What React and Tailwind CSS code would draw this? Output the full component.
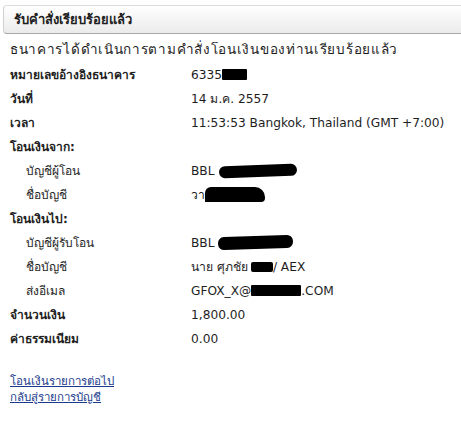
import React from "react";

const Blob = ({ w, h = 12, className = "" }) => (
  <span
    className={`inline-block bg-black align-middle ${className}`}
    style={{ width: w, height: h }}
  />
);

const Row = ({ label, children, indent, bold = true }) => (
  <div className="flex h-[24px] items-center">
    <div className={`w-[181px] shrink-0 ${indent ? "pl-[16px]" : ""} ${bold ? "font-bold" : ""}`}>{label}</div>
    <div className="flex items-center whitespace-nowrap text-[12.2px]">{children}</div>
  </div>
);

export default function App() {
  return (
    <div
      className="w-[461px] h-[429px] bg-white text-[#1e1e1e] text-[12px] overflow-hidden"
      style={{ fontFamily: "Tahoma, 'DejaVu Sans', 'Noto Sans', sans-serif" }}
    >
      <div className="pt-[5px] pl-[3px]">
        <div className="h-[29px] flex items-center pl-[10px] rounded-l-[4px] border border-r-0 border-t-[#dcdcdc] border-l-[#d0d0d0] border-b-[#a8a8a8] bg-gradient-to-b from-white to-[#ebebeb] font-bold text-[13px] text-[#1e1e1e]">
          รับคำสั่งเรียบร้อยแล้ว
        </div>
      </div>
      <div className="pl-[10px]">
        <div className="h-[28px] flex items-center mt-[1px] text-[13.5px] tracking-[0.7px] whitespace-nowrap">ธนาคารได้ดำเนินการตามคำสั่งโอนเงินของท่านเรียบร้อยแล้ว</div>
        <Row label="หมายเลขอ้างอิงธนาคาร">
          6335<Blob w={25} h={11} className="rounded-[1px]" />
        </Row>
        <Row label="วันที่">14 ม.ค. 2557</Row>
        <Row label="เวลา">11:53:53 Bangkok, Thailand (GMT +7:00)</Row>
        <Row label="โอนเงินจาก:" />
        <Row label="บัญชีผู้โอน" indent bold={false}>
          BBL <Blob w={78} h={12} className="ml-[4px] rounded-[6px] -rotate-2" />
        </Row>
        <Row label="ชื่อบัญชี" indent bold={false}>
          วา<Blob w={60} h={15} className="rounded-tr-[10px] rounded-br-[4px] rounded-tl-[6px]" />
        </Row>
        <Row label="โอนเงินไป:" />
        <Row label="บัญชีผู้รับโอน" indent bold={false}>
          BBL <Blob w={75} h={13} className="ml-[3px] rounded-[6px] -rotate-2" />
        </Row>
        <Row label="ชื่อบัญชี" indent bold={false}>
          นาย ศุภชัย <Blob w={22} h={10} className="ml-[3px] rounded-[2px]" />/ AEX
        </Row>
        <Row label="ส่งอีเมล" indent bold={false}>
          GFOX_X@<Blob w={50} h={11} className="rounded-[1px]" />.COM
        </Row>
        <Row label="จำนวนเงิน">1,800.00</Row>
        <Row label="ค่าธรรมเนียม">0.00</Row>
        <div className="mt-[22px] flex flex-col leading-[16px] text-[11.5px]">
          <a href="#" className="text-[#1b3a8c] underline w-fit">โอนเงินรายการต่อไป</a>
          <a href="#" className="text-[#1b3a8c] underline w-fit">กลับสู่รายการบัญชี</a>
        </div>
      </div>
    </div>
  );
}
